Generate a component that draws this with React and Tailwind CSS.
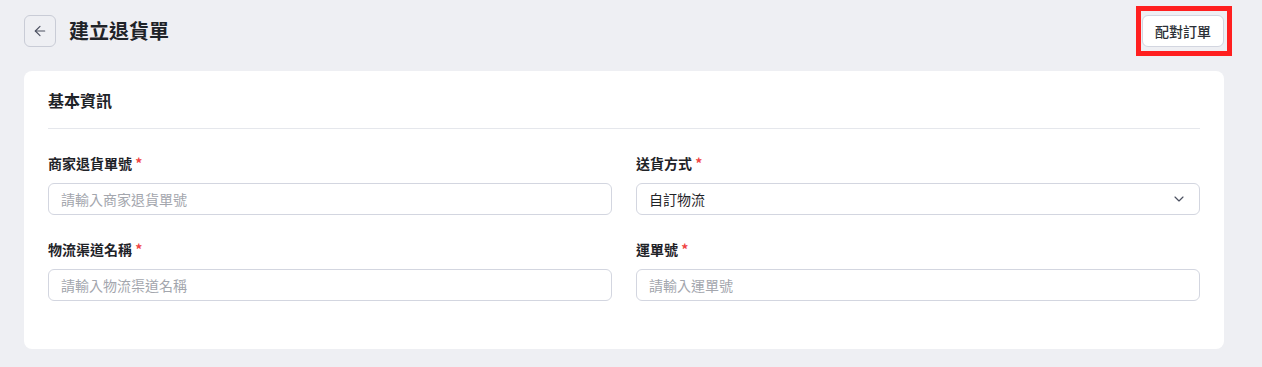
import { ArrowLeft, ChevronDown } from "lucide-react";

const font = { fontFamily: '"Noto Sans CJK TC", "Noto Sans", sans-serif' };

function Field({ label, children }) {
  return (
    <div className="flex flex-col">
      <label className="text-sm leading-5 font-semibold text-[#1f2328] mb-[10px]">
        {label} <span className="text-[#ef4444]">*</span>
      </label>
      {children}
    </div>
  );
}

function TextInput({ placeholder }) {
  return (
    <input
      type="text"
      placeholder={placeholder}
      className="h-8 w-full rounded-md border border-[#d3d6e0] bg-white px-3 text-sm text-[#1f2328] placeholder:text-[#a3a6ad] outline-none"
      style={font}
    />
  );
}

export default function App() {
  return (
    <div className="min-h-screen bg-[#eeeff3] pl-6 pr-[38px] pt-[15px]" style={font}>
      {/* Header */}
      <div className="relative flex h-8 items-center justify-between mb-6">
        <div className="flex items-center">
          <button className="flex h-8 w-8 items-center justify-center rounded-md border border-[#c9ccd6] bg-[#eeeff3] text-[#4b5060]">
            <ArrowLeft size={16} strokeWidth={1.75} />
          </button>
          <h1 className="ml-[13px] text-xl font-bold text-[#1f2328]">建立退貨單</h1>
        </div>
        <button className="h-8 rounded-md border border-[#d3d6e0] bg-white px-3 text-sm font-medium text-[#2b2f36]">
          配對訂單
        </button>
        <div className="pointer-events-none absolute right-[-8px] top-[-9px] h-[50px] w-[96px] border-[5px] border-[#ff1f1f]" />
      </div>

      {/* Card */}
      <div className="rounded-lg bg-white px-6 pt-[17px] pb-12">
        <div className="border-b border-[#e5e7ec] pb-4">
          <h2 className="text-base leading-6 font-semibold text-[#1f2328]">基本資訊</h2>
        </div>
        <div className="mt-6 grid grid-cols-2 gap-x-6 gap-y-6">
          <Field label="商家退貨單號">
            <TextInput placeholder="請輸入商家退貨單號" />
          </Field>
          <Field label="送貨方式">
            <div className="relative flex h-8 items-center rounded-md border border-[#d3d6e0] bg-white px-3 text-sm text-[#1f2328]">
              自訂物流
              <ChevronDown size={16} strokeWidth={1.75} className="absolute right-3 text-[#4b5060]" />
            </div>
          </Field>
          <Field label="物流渠道名稱">
            <TextInput placeholder="請輸入物流渠道名稱" />
          </Field>
          <Field label="運單號">
            <TextInput placeholder="請輸入運單號" />
          </Field>
        </div>
      </div>
    </div>
  );
}
